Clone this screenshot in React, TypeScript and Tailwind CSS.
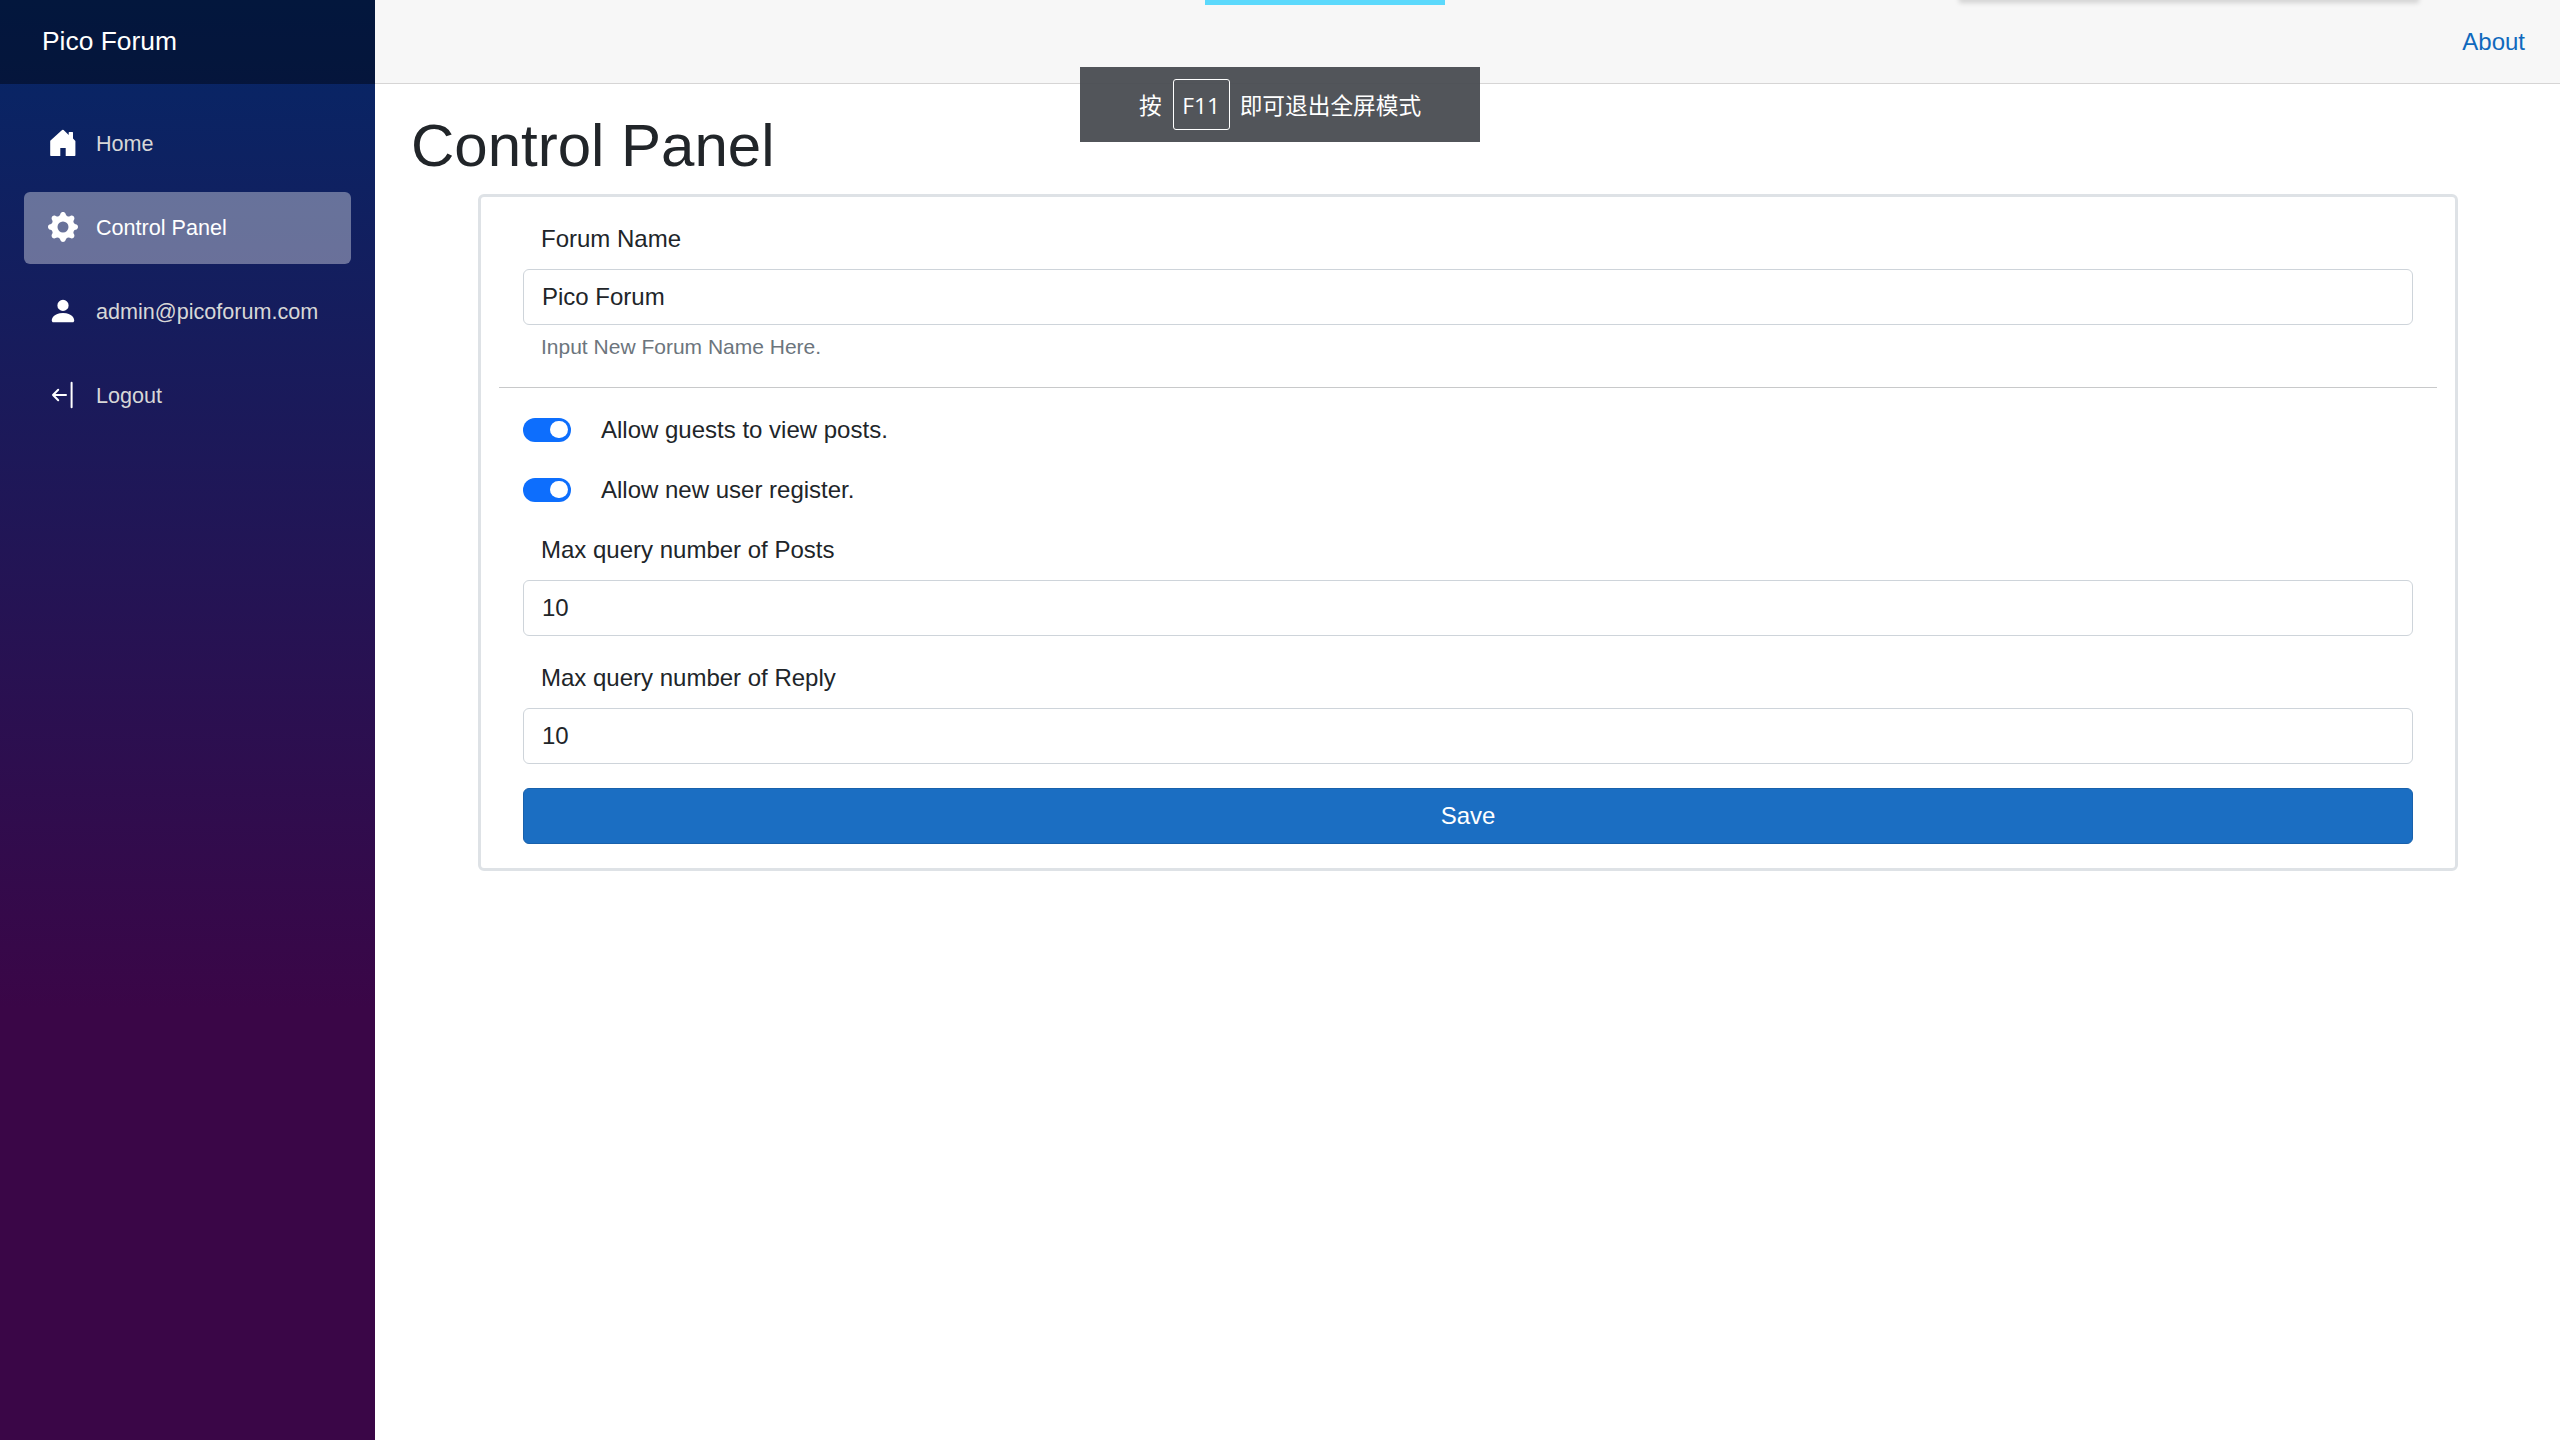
import React from "react";
import { BsGearFill, BsPersonFill } from "react-icons/bs";

function HomeIcon() {
  return (
    <svg width="30" height="30" viewBox="0 0 30 30" fill="currentColor">
      <path d="M14.1 2.1a1.1 1.1 0 0 1 1.5 0l5.1 4.9V4.6q0-.6.6-.6h3.1q.6 0 .6.6v6l2.2 2.1q.2.2.2.6v14q0 .7-.7.7h-9V20h-5.4v8H2.9q-.7 0-.7-.7v-14q0-.4.3-.7z" />
    </svg>
  );
}

function LogoutIcon() {
  return (
    <svg width="30" height="30" viewBox="0 0 30 30" fill="none" stroke="currentColor" strokeWidth="2" strokeLinecap="round" strokeLinejoin="round">
      <path d="M18 15H5M10.2 9.8 5 15l5.2 5.2M23.6 2.8v24.4" />
    </svg>
  );
}

function NavItem({ icon, label, active = false }: { icon: React.ReactNode; label: string; active?: boolean }) {
  return (
    <a
      className={
        active
          ? "flex h-[72px] items-center gap-[18px] rounded-md bg-white/[0.37] pl-6 text-[21.6px] text-white"
          : "flex h-[72px] items-center gap-[18px] rounded-md pl-6 text-[21.6px] text-[#d7d7d7]"
      }
    >
      <span className="mb-0.5 flex size-[30px] text-white">{icon}</span>
      <span className="mb-px">{label}</span>
    </a>
  );
}

function Switch({ label }: { label: string }) {
  return (
    <label className="mb-6 flex h-9 items-center">
      <span className="flex h-6 w-12 items-center justify-end rounded-full bg-[#0d6efd] pr-[3.5px]">
        <span className="size-[17.5px] rounded-full bg-white" />
      </span>
      <span className="ml-[30px]">{label}</span>
    </label>
  );
}

function Field({ label, value, help }: { label: string; value: string; help?: string }) {
  return (
    <div>
      <label className="mb-3 block pl-[18px]">{label}</label>
      <div className="h-14 rounded-md border border-[#ced4da] px-[18px] py-[9px]">{value}</div>
      {help && <div className="mt-1.5 pl-[18px] text-[21px] leading-[31.5px] text-[#6c757d]">{help}</div>}
    </div>
  );
}

export default function App() {
  return (
    <div className="relative flex h-[1440px] w-[2560px] overflow-hidden bg-white font-['Liberation_Sans',Arial,sans-serif] text-2xl leading-9 text-[#212529]">
      <aside className="w-[375px] shrink-0 bg-[linear-gradient(180deg,rgb(5,39,103)_0%,#3a0647_70%)]">
        <div className="flex h-[84px] items-center bg-black/40 pb-0.5 pl-[42px] text-[26.4px] text-white">Pico Forum</div>
        <nav className="flex flex-col gap-3 px-6 pt-6">
          <NavItem icon={<HomeIcon />} label="Home" />
          <NavItem icon={<BsGearFill size={30} />} label="Control Panel" active />
          <NavItem icon={<BsPersonFill size={30} />} label="admin@picoforum.com" />
          <NavItem icon={<LogoutIcon />} label="Logout" />
        </nav>
      </aside>

      <main className="flex-1">
        <header className="flex h-[84px] items-center justify-end border-b border-[#d6d5d5] bg-[#f7f7f7] pr-9 text-[#0f69bd]">
          <a>About</a>
        </header>
        <article className="px-9 pt-[26px]">
          <h1 className="mb-3 text-[60px] leading-[71px] pb-px">Control Panel</h1>
          <section className="mx-[67px] w-[1980px] rounded-md border-[3px] border-[#dee2e6] py-6">
            <div className="px-[42px]">
              <Field label="Forum Name" value="Pico Forum" help="Input New Forum Name Here." />
            </div>
            <hr className="mx-[18px] my-6 border-[#c8c9ca]" />
            <div className="px-[42px]">
              <Switch label="Allow guests to view posts." />
              <Switch label="Allow new user register." />
              <div className="flex flex-col gap-6">
                <Field label="Max query number of Posts" value="10" />
                <Field label="Max query number of Reply" value="10" />
                <button className="h-14 rounded-md border border-[#1861ac] bg-[#1b6ec2] text-white">Save</button>
              </div>
            </div>
          </section>
        </article>
      </main>

      <div className="absolute left-[1205px] top-0 h-[5px] w-60 bg-[#5cd9fc]" />
      <div className="absolute left-[1962px] top-[-8px] h-2 w-[454px] shadow-[0_0_5px_3px_rgba(0,0,0,0.15)]" />
      <div className="absolute left-[1080px] top-[67px] flex h-[75px] w-[400px] items-center bg-[#494c51]/95 pl-[59px] font-['Open_Sans','Noto_Sans_CJK_SC',sans-serif] text-[22.7px] text-white">
        <span className="pt-0.5">按</span>
        <span className="ml-[11px] flex h-[51px] w-[57px] items-center justify-center rounded-[3px] border-[1.5px] border-white pt-0.5">F11</span>
        <span className="ml-[10px] whitespace-nowrap pt-0.5">即可退出全屏模式</span>
      </div>
    </div>
  );
}
